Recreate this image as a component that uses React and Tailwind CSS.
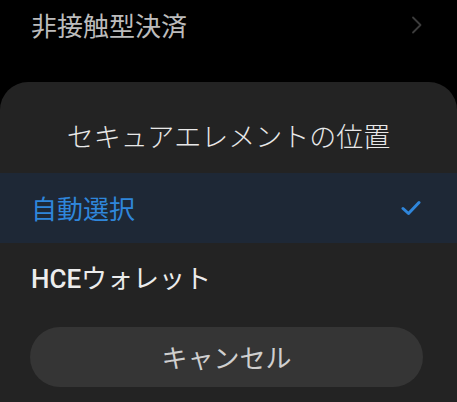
import React from 'react';

const jp = { fontFamily: '"Noto Sans CJK JP", "Noto Sans", sans-serif' };

function Check() {
    return (
        <svg width="20" height="16" viewBox="0 0 20 16" fill="none">
            <polyline points="2,8.5 7.5,13.5 18,2.5" stroke="#2f86db" strokeWidth="3" strokeLinecap="round" strokeLinejoin="round" />
        </svg>
    );
}

function Chevron() {
    return (
        <svg width="12" height="18" viewBox="0 0 12 18" fill="none">
            <polyline points="2,1.5 9.5,9 2,16.5" stroke="#3c3c3c" strokeWidth="1.8" strokeLinecap="round" strokeLinejoin="round" />
        </svg>
    );
}

export default function App() {
    const options = [
        { label: '自動選択', selected: true },
        { label: 'HCEウォレット', selected: false },
    ];

    return (
        <div className="w-[457px] h-[402px] bg-black overflow-hidden flex flex-col" style={jp}>
            {/* background settings list */}
            <div className="h-[82px] shrink-0">
                <div className="h-[49px] flex items-center justify-between pl-[31px] pr-[34px]">
                    <span className="text-[26px] leading-none text-[#bcbcbc]">非接触型決済</span>
                    <Chevron />
                </div>
            </div>

            {/* bottom sheet */}
            <div className="flex-1 bg-[#232323] rounded-t-[28px] flex flex-col">
                <div className="h-[91px] pt-[15px] flex items-center justify-center">
                    <h2 className="text-[27px] leading-none font-light text-[#e8e8e8]">セキュアエレメントの位置</h2>
                </div>

                {options.map((opt) => (
                    <div
                        key={opt.label}
                        className={`h-[70px] flex items-center justify-between pl-[31px] pr-[36px] ${opt.selected ? 'bg-[#1e2836]' : ''}`}
                    >
                        {opt.selected ? (
                            <span className="text-[26px] leading-none text-[#2f86db]">{opt.label}</span>
                        ) : (
                            <span className="text-[26px] leading-none text-[#ececec]">
                                <span className="font-medium" style={{ fontFamily: 'Roboto, "Noto Sans", sans-serif' }}>HCE</span>ウォレット
                            </span>
                        )}
                        {opt.selected && <Check />}
                    </div>
                ))}

                <button
                    type="button"
                    className="mt-[14px] ml-[30px] w-[393px] h-[60px] rounded-full bg-[#353535] text-[26px] leading-none text-[#cfcfcf]"
                    style={jp}
                >
                    キャンセル
                </button>
            </div>
        </div>
    );
}
